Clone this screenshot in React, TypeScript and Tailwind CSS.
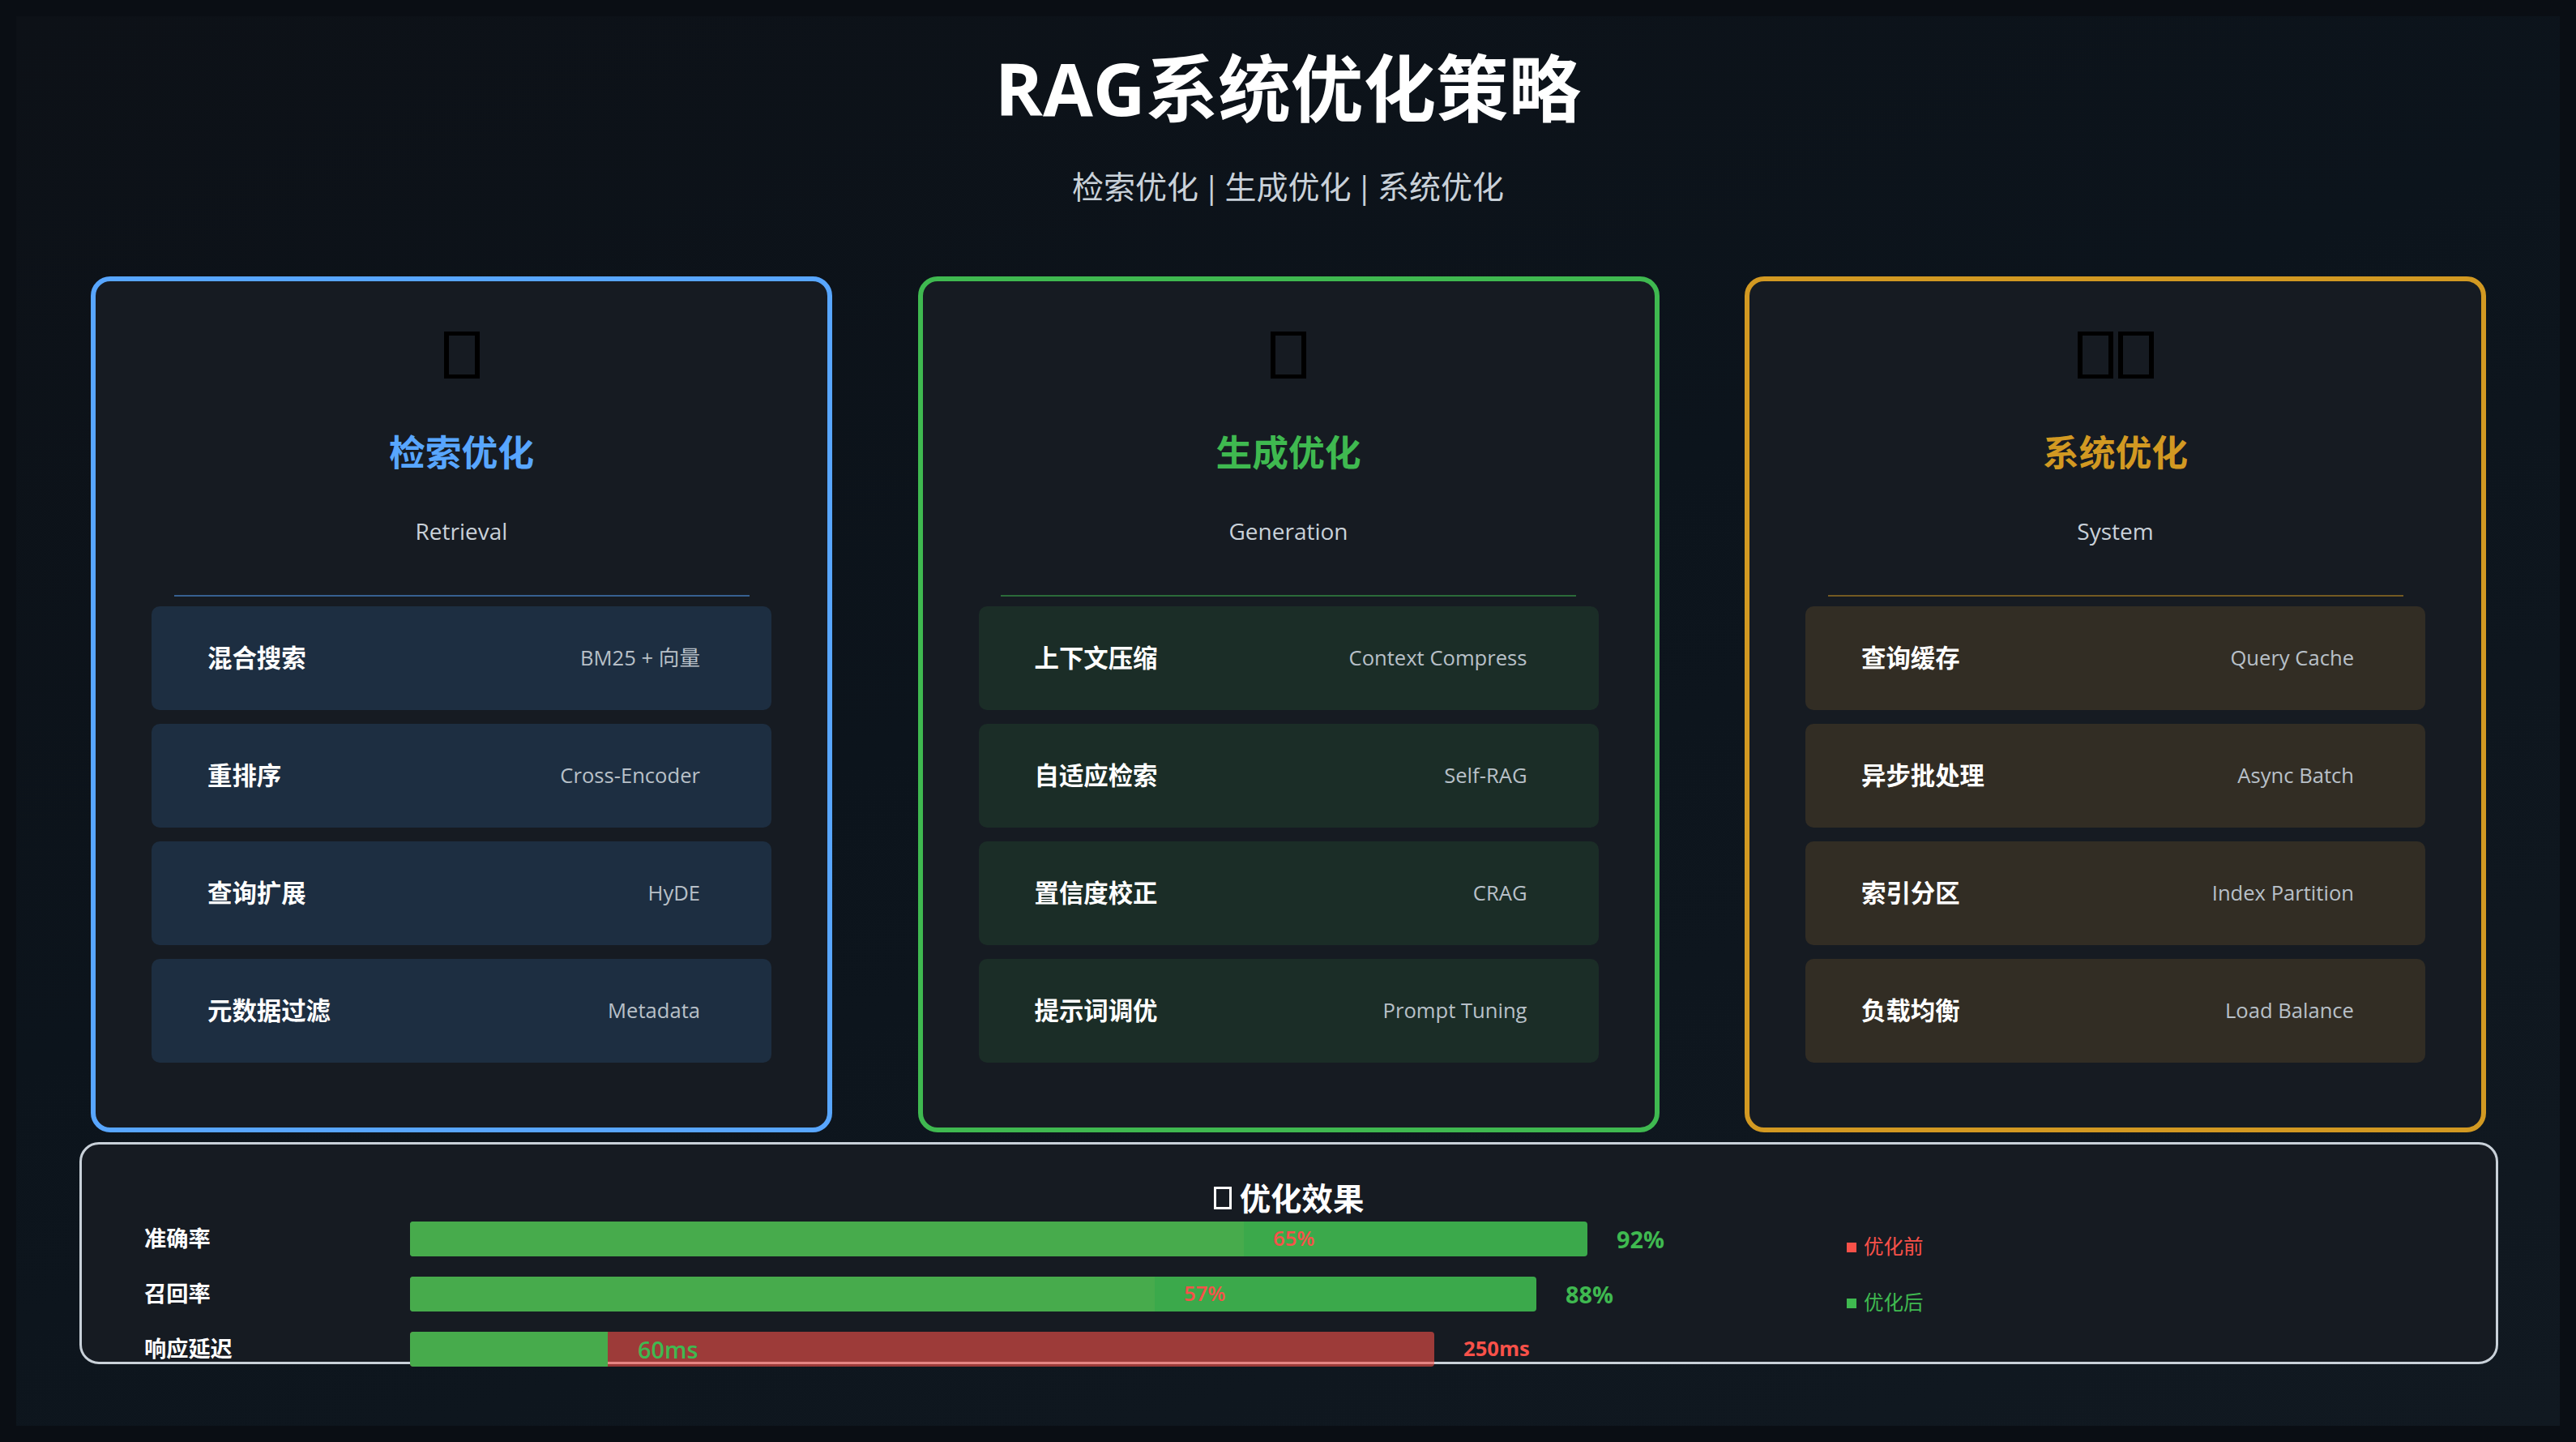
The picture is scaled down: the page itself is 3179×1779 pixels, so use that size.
import React from "react";

const sans = "font-['Open_Sans','Noto_Sans_CJK_SC',sans-serif]";

const cards = [
  {
    title: "检索优化",
    en: "Retrieval",
    border: "border-[#58a6ff]",
    text: "text-[#58a6ff]",
    rule: "bg-[#58a6ff]/50",
    item: "bg-[#1d2e41]",
    glyphs: 1,
    items: [
      ["混合搜索", "BM25 + 向量"],
      ["重排序", "Cross-Encoder"],
      ["查询扩展", "HyDE"],
      ["元数据过滤", "Metadata"],
    ],
  },
  {
    title: "生成优化",
    en: "Generation",
    border: "border-[#3fb950]",
    text: "text-[#3fb950]",
    rule: "bg-[#3fb950]/50",
    item: "bg-[#1b2d27]",
    glyphs: 1,
    items: [
      ["上下文压缩", "Context Compress"],
      ["自适应检索", "Self-RAG"],
      ["置信度校正", "CRAG"],
      ["提示词调优", "Prompt Tuning"],
    ],
  },
  {
    title: "系统优化",
    en: "System",
    border: "border-[#d29922]",
    text: "text-[#d29922]",
    rule: "bg-[#d29922]/50",
    item: "bg-[#322d24]",
    glyphs: 2,
    items: [
      ["查询缓存", "Query Cache"],
      ["异步批处理", "Async Batch"],
      ["索引分区", "Index Partition"],
      ["负载均衡", "Load Balance"],
    ],
  },
];

// emoji that the screenshot's browser had no font for: an empty box
const Tofu = () => <span className="block w-[44px] h-[58px] border-x-[6px] border-y-[5px] border-black" />;

const Card = ({ card }: { card: (typeof cards)[number] }) => (
  <div className={`w-[915px] h-[1056px] rounded-[24px] border-[6px] bg-[#161b22] flex flex-col items-center ${card.border}`}>
    <div className="flex gap-[6px] mt-[62px] h-[58px]">
      {Array.from({ length: card.glyphs }).map((_, i) => (
        <Tofu key={i} />
      ))}
    </div>
    <h2 className={`mt-[60px] h-[62px] leading-[62px] text-[44.8px] font-bold ${card.text}`}>{card.title}</h2>
    <p className="mt-[46px] h-[40px] leading-[40px] text-[28px] text-[#c9d1d9]">{card.en}</p>
    <div className={`mt-[58.5px] w-[710px] h-[2px] ${card.rule}`} />
    <div className="mt-[12.5px] w-[765px] flex flex-col gap-[17.5px]">
      {card.items.map(([name, en]) => (
        <div key={name} className={`h-[127.5px] rounded-[10px] pl-[69px] pr-[88px] flex items-center justify-between ${card.item}`}>
          <span className="text-[30.4px] font-bold text-white">{name}</span>
          <span className="text-[25.6px] text-[#b8c0c8]">{en}</span>
        </div>
      ))}
    </div>
  </div>
);

export default function App() {
  return (
    <div className={`w-[3179px] h-[1779px] overflow-hidden bg-[#0a0e14] p-[20px] ${sans}`}>
      <div className="h-[1739px] w-[3139px] bg-[linear-gradient(160deg,#0d1117_0%,#0c141c_45%,#111921_100%)] flex flex-col">
        <header className="flex flex-col items-center">
          <h1 className="mt-[38px] h-[100px] leading-[100px] text-[89.6px] font-bold text-white">RAG系统优化策略</h1>
          <p className="mt-[47px] h-[50px] leading-[50px] text-[39px] text-[#c9d1d9] [word-spacing:-4.6px]">检索优化 | 生成优化 | 系统优化</p>
        </header>

        <div className="mt-[86px] pl-[92px] flex gap-[105.5px]">
          {cards.map((card) => (
            <Card key={card.title} card={card} />
          ))}
        </div>

        {/* results panel, the last bar sticks out through its bottom border */}
        <section className="mt-[12px] ml-[78px] w-[2985px] h-[274px] rounded-[24px] border-[3px] border-[#c9d1d9] bg-[#161b22] flex flex-col">
          <h3 className="mt-[41px] h-[50px] leading-[50px] text-[38.4px] font-bold text-white flex items-center justify-center gap-[10px]">
            <span className="block w-[22px] h-[28px] border-[3px] border-white" />
            优化效果
          </h3>
          <div className="mt-[4px] pl-[77px] flex">
            <div className="w-[1875px] shrink-0 flex flex-col gap-[25px]">
              <div className="flex items-center h-[43px]">
                <span className="w-[328px] shrink-0 text-[27.2px] font-bold text-white">准确率</span>
                <div className="w-[1453px] shrink-0 h-full flex items-center rounded-[4px] overflow-hidden bg-[#3fb950]/90">
                  <div className="w-[1029px] h-full bg-[#47ab4c]" />
                  <span className="pl-[36px] text-[25.6px] font-semibold text-[#f85149]">65%</span>
                </div>
                <span className="ml-[36px] text-[28.8px] font-bold text-[#3fb950]">92%</span>
              </div>
              <div className="flex items-center h-[43px]">
                <span className="w-[328px] shrink-0 text-[27.2px] font-bold text-white">召回率</span>
                <div className="w-[1390px] shrink-0 h-full flex items-center rounded-[4px] overflow-hidden bg-[#3fb950]/90">
                  <div className="w-[919px] h-full bg-[#47ab4c]" />
                  <span className="pl-[36px] text-[25.6px] font-semibold text-[#f85149]">57%</span>
                </div>
                <span className="ml-[36px] text-[28.8px] font-bold text-[#3fb950]">88%</span>
              </div>
              <div className="flex items-center h-[43px]">
                <span className="w-[328px] shrink-0 text-[27.2px] font-bold text-white">响应延迟</span>
                <div className="w-[1264px] shrink-0 h-full flex items-center rounded-[4px] overflow-hidden bg-[#f85149]/60">
                  <div className="w-[244px] h-full bg-[#47ab4c]" />
                  <span className="pl-[37px] text-[28.8px] font-semibold text-[#3fb950]">60ms</span>
                </div>
                <span className="ml-[36px] text-[25.6px] font-bold text-[#f85149]">250ms</span>
              </div>
            </div>
            <div className="ml-[226px] mt-[15px] flex flex-col gap-[36px] text-[24.5px]">
              <div className="h-[33px] flex items-center gap-[9px] text-[#f85149]">
                <span className="block w-[12px] h-[12px] bg-[#f85149]" />
                优化前
              </div>
              <div className="h-[33px] flex items-center gap-[9px] text-[#3fb950]">
                <span className="block w-[12px] h-[12px] bg-[#3fb950]" />
                优化后
              </div>
            </div>
          </div>
        </section>
      </div>
    </div>
  );
}
